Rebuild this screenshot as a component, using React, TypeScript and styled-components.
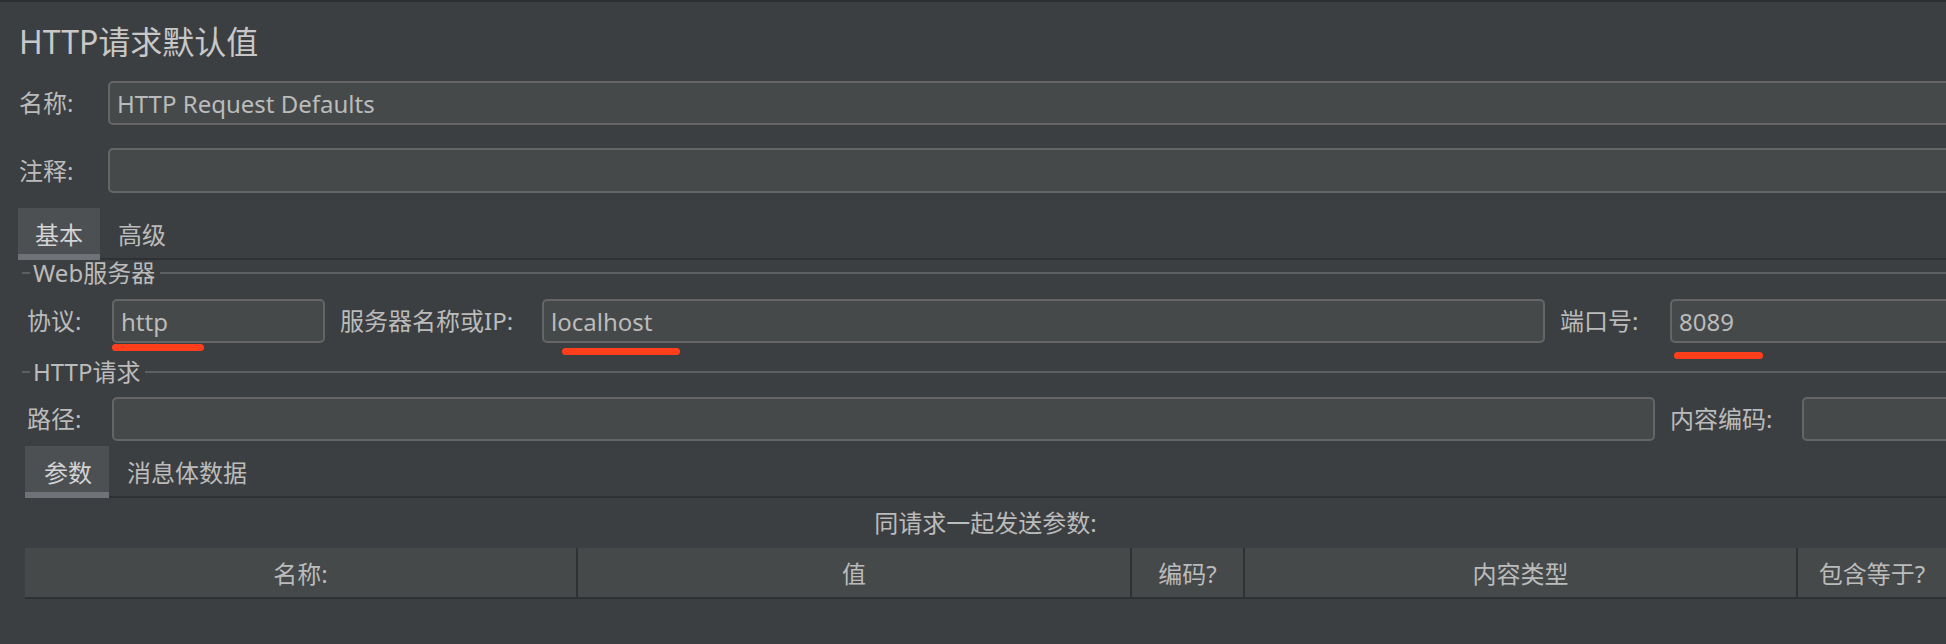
import styled, { createGlobalStyle } from "styled-components";

const GlobalStyle = createGlobalStyle`
  html, body {
    margin: 0;
    padding: 0;
    background: #3c3f41;
    overflow: hidden;
  }
  * {
    box-sizing: border-box;
  }
`;

const colors = {
  bg: "#3c3f41",
  text: "#bbbbbb",
  title: "#c8c8c8",
  field: "#45494a",
  fieldBorder: "#656565",
  tab: "#4c5053",
  tabLine: "#6f7377",
  dark: "#2f3234",
  rule: "#5d6063",
  mark: "#ff3f1c",
};

const Page = styled.div`
  width: 1946px;
  height: 644px;
  overflow: hidden;
  background: ${colors.bg};
  border-top: 2px solid #2d3033;
  padding-top: 20px;
  font-family: "Noto Sans", "Noto Sans CJK SC", sans-serif;
  font-size: 24px;
  color: ${colors.text};
`;

const Title = styled.h1`
  margin: 0 0 19px 19px;
  font-size: 32px;
  font-weight: 400;
  line-height: 40px;
  color: ${colors.title};
`;

const Row = styled.div<{ $indent: number; $top: number }>`
  display: flex;
  align-items: center;
  gap: 15px;
  margin-top: ${(p) => p.$top}px;
  padding-left: ${(p) => p.$indent}px;
  margin-right: -24px;
`;

const Label = styled.label<{ $w: number }>`
  flex: none;
  width: ${(p) => p.$w - 15}px;
  white-space: nowrap;
  line-height: 30px;
`;

const FieldWrap = styled.div<{ $w?: number }>`
  position: relative;
  flex: ${(p) => (p.$w ? "none" : "1")};
  width: ${(p) => (p.$w ? `${p.$w}px` : "auto")};
`;

const Field = styled.input<{ $h?: number }>`
  display: block;
  width: 100%;
  height: ${(p) => p.$h ?? 44}px;
  padding: 0 7px;
  background: ${colors.field};
  border: 2px solid ${colors.fieldBorder};
  border-radius: 5px;
  color: ${colors.text};
  font: inherit;
  outline: none;
`;

/* red hand-drawn underline over the screenshot */
const Mark = styled.span<{ $left: number; $width: number; $top: number }>`
  position: absolute;
  left: ${(p) => p.$left}px;
  top: calc(100% + ${(p) => p.$top}px);
  width: ${(p) => p.$width}px;
  height: 7px;
  border-radius: 4px;
  background: ${colors.mark};
`;

const TabBar = styled.div<{ $left: number; $top: number }>`
  display: flex;
  height: 52px;
  margin: ${(p) => p.$top}px 0 0 ${(p) => p.$left}px;
  box-shadow: inset 0 -2px ${colors.dark};
`;

const Tab = styled.div<{ $active?: boolean; $pad: string }>`
  display: flex;
  align-items: center;
  padding: ${(p) => p.$pad};
  padding-top: 4px;
  background: ${(p) => (p.$active ? colors.tab : "transparent")};
  border-bottom: 6px solid ${(p) => (p.$active ? colors.tabLine : "transparent")};
  color: ${(p) => (p.$active ? "#d4d4d4" : colors.text)};
  white-space: nowrap;
`;

const Legend = styled.div<{ $top: number }>`
  display: flex;
  align-items: center;
  height: 26px;
  margin-top: ${(p) => p.$top}px;
  padding-left: 22px;
  line-height: 26px;

  &::before {
    content: "";
    width: 8px;
    height: 2px;
    background: ${colors.rule};
  }

  &::after {
    content: "";
    flex: 1;
    height: 2px;
    background: ${colors.rule};
  }

  span {
    padding: 0 3px;
    margin-right: 2px;
  }
`;

const Panel = styled.div`
  margin-left: 25px;
`;

const Caption = styled.div`
  height: 50px;
  line-height: 50px;
  text-align: center;
`;

const HeaderRow = styled.div`
  display: grid;
  grid-template-columns: 553px 554px 113px 553px 1fr;
  height: 51px;
  background: ${colors.field};
  border-bottom: 2px solid ${colors.dark};
`;

const HeaderCell = styled.div`
  display: flex;
  align-items: center;
  justify-content: center;
  border-right: 2px solid ${colors.dark};
  white-space: nowrap;

  &:last-child {
    border-right: none;
  }
`;

const columns = ["名称:", "值", "编码?", "内容类型", "包含等于?"];

export default function App() {
  return (
    <>
      <GlobalStyle />
      <Page>
        <Title>HTTP请求默认值</Title>

        <Row $indent={19} $top={0}>
          <Label $w={89}>名称:</Label>
          <FieldWrap>
            <Field readOnly defaultValue="HTTP Request Defaults" />
          </FieldWrap>
        </Row>
        <Row $indent={19} $top={23}>
          <Label $w={89}>注释:</Label>
          <FieldWrap>
            <Field readOnly defaultValue="" $h={45} />
          </FieldWrap>
        </Row>

        <TabBar $left={18} $top={15}>
          <Tab $active $pad="0 17px">基本</Tab>
          <Tab $pad="0 18px">高级</Tab>
        </TabBar>

        <Legend $top={0}>
          <span>Web服务器</span>
        </Legend>
        <Row $indent={27} $top={13}>
          <Label $w={85}>协议:</Label>
          <FieldWrap $w={213}>
            <Field readOnly defaultValue="http" />
            <Mark $left={0} $width={92} $top={1} />
          </FieldWrap>
          <Label $w={202}>服务器名称或IP:</Label>
          <FieldWrap>
            <Field readOnly defaultValue="localhost" />
            <Mark $left={20} $width={118} $top={5} />
          </FieldWrap>
          <Label $w={110}>端口号:</Label>
          <FieldWrap $w={300}>
            <Field readOnly defaultValue="8089" />
            <Mark $left={4} $width={89} $top={9} />
          </FieldWrap>
        </Row>

        <Legend $top={16}>
          <span>HTTP请求</span>
        </Legend>
        <Row $indent={27} $top={12}>
          <Label $w={85}>路径:</Label>
          <FieldWrap>
            <Field readOnly defaultValue="" />
          </FieldWrap>
          <Label $w={132}>内容编码:</Label>
          <FieldWrap $w={168}>
            <Field readOnly defaultValue="" />
          </FieldWrap>
        </Row>

        <Panel>
          <TabBar $left={0} $top={5}>
            <Tab $active $pad="0 17px 0 19px">参数</Tab>
            <Tab $pad="0 18px">消息体数据</Tab>
          </TabBar>
          <Caption>同请求一起发送参数:</Caption>
          <HeaderRow>
            {columns.map((c) => (
              <HeaderCell key={c}>{c}</HeaderCell>
            ))}
          </HeaderRow>
        </Panel>
      </Page>
    </>
  );
}
